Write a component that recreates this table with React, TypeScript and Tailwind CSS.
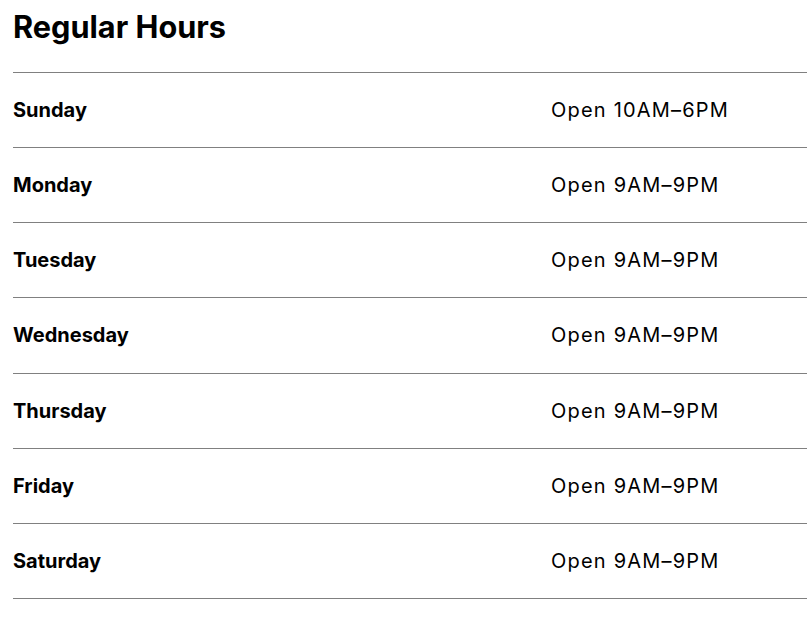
const hours = [
  { day: 'Sunday', time: 'Open 10AM–6PM' },
  { day: 'Monday', time: 'Open 9AM–9PM' },
  { day: 'Tuesday', time: 'Open 9AM–9PM' },
  { day: 'Wednesday', time: 'Open 9AM–9PM' },
  { day: 'Thursday', time: 'Open 9AM–9PM' },
  { day: 'Friday', time: 'Open 9AM–9PM' },
  { day: 'Saturday', time: 'Open 9AM–9PM' },
]

export default function App() {
  return (
    <div className="min-h-screen bg-white pl-[13px] text-black [font-family:Inter,'Noto_Sans',sans-serif]">
      <h1 className="pt-[9px] pb-[27px] text-[30.7px] font-bold leading-[36px]">Regular Hours</h1>
      <div className="border-t border-[#808080]">
        {hours.map(h => (
          <div key={h.day} className="flex h-[75.15px] items-center border-b border-[#808080] text-[20px] leading-[24px]">
            <span className="w-[538px] font-bold">{h.day}</span>
            <span className="tracking-[1.2px]">{h.time}</span>
          </div>
        ))}
      </div>
    </div>
  )
}
